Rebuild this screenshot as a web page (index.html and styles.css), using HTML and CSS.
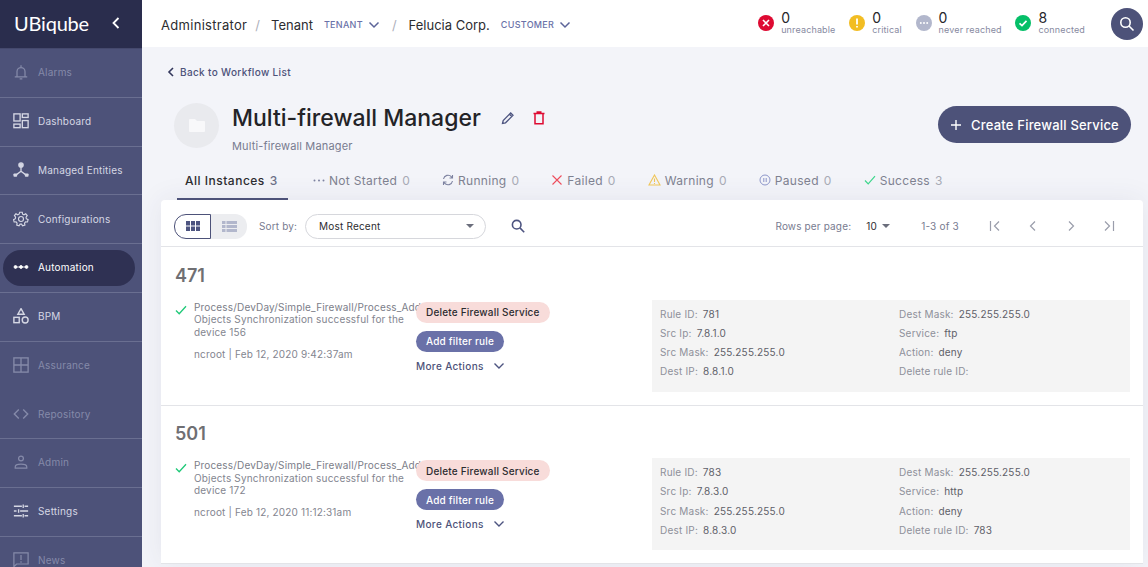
FILE: index.html
```html
<!DOCTYPE html>
<html lang="en">
<head>
    <meta charset="UTF-8">
    <meta name="viewport" content="width=device-width, initial-scale=1.0">
    <title>UBiqube - Multi-firewall Manager</title>
    <link rel="stylesheet" href="styles.css">
</head>
<body>

<div class="app">
    <aside class="sidebar">
        <div class="brand">
            <span class="brand-name">UBiqube</span>
            <svg class="brand-back" width="10" height="14" viewBox="0 0 10 14"><path d="M7.5 2 L2.5 7 L7.5 12" fill="none" stroke="#fff" stroke-width="1.8"/></svg>
        </div>
        <nav class="menu">
            <a class="menu-item dim">
                <svg viewBox="0 0 18 18" fill="none" stroke="currentColor" stroke-width="1.4"><path d="M2 14.5h14M4.500 14.500V8.500a4.500 4.500 0 0 1 9 0v6M7.500 16.800h3M9 1.500v2.500"/></svg>
                <span>Alarms</span>
            </a>
            <a class="menu-item">
                <svg viewBox="0 0 18 18" fill="none" stroke="currentColor" stroke-width="1.5"><rect x="1" y="1" width="7" height="8"/><rect x="10.500" y="1" width="6.500" height="4"/><rect x="1" y="12.500" width="7" height="4"/><rect x="10.500" y="8.500" width="6.500" height="8"/></svg>
                <span>Dashboard</span>
            </a>
            <a class="menu-item">
                <svg viewBox="0 0 18 18" fill="currentColor" stroke="currentColor" stroke-width="1.5"><circle cx="9" cy="3.400" r="2.400"/><rect x="0.500" y="12.800" width="4.200" height="3.800" stroke="none" rx="1"/><rect x="13.300" y="12.800" width="4.200" height="3.800" stroke="none" rx="1"/><path d="M9 5v5.500M9 10.500l-5.500 4M9 10.500l5.500 4" fill="none"/></svg>
                <span>Managed Entities</span>
            </a>
            <a class="menu-item">
                <svg viewBox="0 0 18 18" fill="none" stroke="currentColor" stroke-width="1.3"><circle cx="9" cy="9" r="2.800"/><path d="M7.600 1.400h2.800l.4 2.200 1.500.7 2-1.100 1.700 2-1.300 1.800.3 1.700 2 1-.7 2.700-2.200-.1-1.100 1.300.4 2.200-2.600.9-1.200-1.900h-1.600l-1.200 1.900-2.600-.9.4-2.200-1.100-1.300-2.200.1-.7-2.700 2-1 .3-1.700-1.300-1.800 1.700-2 2 1.100 1.500-.7z"/></svg>
                <span>Configurations</span>
            </a>
            <a class="menu-item active">
                <svg viewBox="0 0 18 18" fill="#fff" stroke="#fff" stroke-width="1"><circle cx="2.800" cy="9" r="1.600"/><circle cx="9" cy="9" r="1.600"/><circle cx="15.200" cy="9" r="1.600"/><path d="M3 9h12"/></svg>
                <span>Automation</span>
            </a>
            <a class="menu-item">
                <svg viewBox="0 0 18 18" fill="none" stroke="currentColor" stroke-width="1.600"><path d="M9 .8 12.500 7H5.500z"/><rect x="1" y="10.500" width="6" height="6"/><circle cx="13.700" cy="13.500" r="3.300"/></svg>
                <span>BPM</span>
            </a>
            <a class="menu-item dim no-line">
                <svg viewBox="0 0 18 18" fill="none" stroke="currentColor" stroke-width="1.500"><rect x="1" y="1" width="16" height="16"/><path d="M9 1v16M1 9h16"/></svg>
                <span>Assurance</span>
            </a>
            <a class="menu-item dim">
                <svg viewBox="0 0 18 18" fill="none" stroke="currentColor" stroke-width="1.600"><path d="M6.500 4 1.500 9l5 5M11.500 4l5 5-5 5"/></svg>
                <span>Repository</span>
            </a>
            <a class="menu-item dim">
                <svg viewBox="0 0 18 18" fill="none" stroke="currentColor" stroke-width="1.400"><circle cx="9" cy="5" r="2.700"/><path d="M2.500 15.800v-1.300c0-1.800 2.600-3 6.500-3s6.500 1.200 6.500 3v1.300z"/></svg>
                <span>Admin</span>
            </a>
            <a class="menu-item">
                <svg viewBox="0 0 18 18" fill="none" stroke="currentColor" stroke-width="1.500"><path d="M1 3.700h9M13 3.700h4M11.500 1.700v4M1 9h3M8 9h9M6.300 7v4M1 14.300h9M13 14.300h4M11.500 12.300v4"/></svg>
                <span>Settings</span>
            </a>
            <a class="menu-item dim">
                <svg viewBox="0 0 18 18" fill="none" stroke="currentColor" stroke-width="1.400"><path d="M1 1h16v12.500H4l-3 3z"/><path d="M9 3.500v5.500M9 10.300v1.700"/></svg>
                <span>News</span>
            </a>
        </nav>
    </aside>

    <div class="main">
        <header class="topbar">
            <div class="crumbs">
                <span class="crumb-admin">Administrator</span>
                <span class="slash">/</span>
                <span>Tenant</span>
                <span class="crumb-tag">TENANT</span>
                <svg class="crumb-arrow" width="12" height="8" viewBox="0 0 12 8"><path d="M1.500 1.500 6 6l4.500-4.500" fill="none" stroke="#5c6499" stroke-width="1.500"/></svg>
                <span class="slash second">/</span>
                <span>Felucia Corp.</span>
                <span class="crumb-tag">CUSTOMER</span>
                <svg class="crumb-arrow" width="12" height="8" viewBox="0 0 12 8"><path d="M1.500 1.500 6 6l4.500-4.500" fill="none" stroke="#5c6499" stroke-width="1.500"/></svg>
            </div>
            <div class="stats">
                <div class="stat">
                    <svg width="16" height="16" viewBox="0 0 16 16"><circle cx="8" cy="8" r="8" fill="#de0a32"/><path d="M5 5l6 6M11 5l-6 6" stroke="#fff" stroke-width="1.600"/></svg>
                    <div class="stat-text"><b>0</b><small>unreachable</small></div>
                </div>
                <div class="stat">
                    <svg width="16" height="16" viewBox="0 0 16 16"><circle cx="8" cy="8" r="8" fill="#f2bd23"/><path d="M8 3.500v6M8 11v1.500" stroke="#fff" stroke-width="1.800"/></svg>
                    <div class="stat-text"><b>0</b><small>critical</small></div>
                </div>
                <div class="stat">
                    <svg width="16" height="16" viewBox="0 0 16 16"><circle cx="8" cy="8" r="8" fill="#b2b7cc"/><circle cx="4.800" cy="8" r="1" fill="#fff"/><circle cx="8" cy="8" r="1" fill="#fff"/><circle cx="11.200" cy="8" r="1" fill="#fff"/></svg>
                    <div class="stat-text"><b>0</b><small>never reached</small></div>
                </div>
                <div class="stat">
                    <svg width="16" height="16" viewBox="0 0 16 16"><circle cx="8" cy="8" r="8" fill="#05bf68"/><path d="M4.500 8.300 7 10.600l4.500-4.800" fill="none" stroke="#fff" stroke-width="1.700"/></svg>
                    <div class="stat-text"><b>8</b><small>connected</small></div>
                </div>
            </div>
            <div class="top-search">
                <svg width="16" height="16" viewBox="0 0 16 16" fill="none" stroke="#fff" stroke-width="1.600"><circle cx="6.500" cy="6.500" r="4.700"/><path d="M10 10l4.500 4.500"/></svg>
            </div>
        </header>

        <div class="content">
            <a class="back-link">
                <svg width="8" height="10" viewBox="0 0 8 10"><path d="M6 1 2 5l4 4" fill="none" stroke="#33375c" stroke-width="1.600"/></svg>
                Back to Workflow List
            </a>

            <div class="title-row">
                <div class="folder">
                    <svg width="16" height="13" viewBox="0 0 16 13"><path d="M1 0h5l2 2h7a1 1 0 0 1 1 1v9a1 1 0 0 1-1 1H1a1 1 0 0 1-1-1V1a1 1 0 0 1 1-1z" fill="#f8f8fa"/></svg>
                </div>
                <div class="title-text">
                    <div class="title-line">
                        <h1>Multi-firewall Manager</h1>
                        <svg class="edit-icon" width="14" height="14" viewBox="0 0 14 14" fill="none" stroke="#4d5480" stroke-width="1.300"><path d="M1.500 12.500l.7-3L9.700 2l2.300 2.300-7.500 7.500zM8.500 3.200l2.300 2.300"/></svg>
                        <svg class="trash-icon" width="14" height="14" viewBox="0 0 14 14" fill="none" stroke="#de0a32" stroke-width="1.500"><path d="M1.500 2.500h11M4.500 1h5M3 2.500v10.300h8V2.500"/></svg>
                    </div>
                    <div class="subtitle">Multi-firewall Manager</div>
                </div>
                <button class="create-btn">
                    <svg width="12" height="12" viewBox="0 0 12 12"><path d="M6 1v10M1 6h10" stroke="#fff" stroke-width="1.400"/></svg>
                    Create Firewall Service
                </button>
            </div>

            <div class="tabs">
                <div class="tab active">All Instances <span>3</span></div>
                <div class="tab">
                    <svg width="12" height="11" viewBox="0 0 12 11" fill="#7d82a0"><circle cx="1.500" cy="5.500" r="1"/><circle cx="6" cy="5.500" r="1"/><circle cx="10.500" cy="5.500" r="1"/></svg>
                    Not Started <span>0</span>
                </div>
                <div class="tab">
                    <svg width="12" height="12" viewBox="0 0 12 12" fill="none" stroke="#7d82a0" stroke-width="1.100"><path d="M1.500 5a4.600 4.600 0 0 1 8-2.200L10.500 4M10.500 7a4.600 4.600 0 0 1-8 2.200L1.500 8M10.500 1v3h-3M1.500 11V8h3"/></svg>
                    Running <span>0</span>
                </div>
                <div class="tab">
                    <svg width="12" height="12" viewBox="0 0 12 12"><path d="M1.500 1.500l9 9M10.500 1.500l-9 9" stroke="#ee4c5c" stroke-width="1.100"/></svg>
                    Failed <span>0</span>
                </div>
                <div class="tab">
                    <svg width="13" height="12" viewBox="0 0 13 12" fill="none" stroke="#f0c659" stroke-width="1.100"><path d="M6.500 1 12 11H1zM6.500 4.500v3.500M6.500 9v1"/></svg>
                    Warning <span>0</span>
                </div>
                <div class="tab">
                    <svg width="12" height="12" viewBox="0 0 12 12" fill="none" stroke="#8c95c9" stroke-width="1"><circle cx="6" cy="6" r="5"/><path d="M4.800 4v4M7.200 4v4"/></svg>
                    Paused <span>0</span>
                </div>
                <div class="tab">
                    <svg width="12" height="10" viewBox="0 0 12 10"><path d="M1 5.500 4.200 8.800 11 1.200" fill="none" stroke="#3dd68c" stroke-width="1.200"/></svg>
                    Success <span>3</span>
                </div>
            </div>

            <div class="card">
                <div class="toolbar">
                    <div class="view-switch">
                        <div class="view-btn on">
                            <svg width="14" height="10" viewBox="0 0 14 10" fill="#4d5480"><rect width="4" height="4.500"/><rect x="5" width="4" height="4.500"/><rect x="10" width="4" height="4.500"/><rect y="5.500" width="4" height="4.500"/><rect x="5" y="5.500" width="4" height="4.500"/><rect x="10" y="5.500" width="4" height="4.500"/></svg>
                        </div>
                        <div class="view-btn">
                            <svg width="15" height="11" viewBox="0 0 15 11" fill="#b2b7cc"><rect width="3.500" height="3"/><rect x="4.500" width="10.500" height="3"/><rect y="4" width="3.500" height="3"/><rect x="4.500" y="4" width="10.500" height="3"/><rect y="8" width="3.500" height="3"/><rect x="4.500" y="8" width="10.500" height="3"/></svg>
                        </div>
                    </div>
                    <span class="sort-label">Sort by:</span>
                    <div class="sort-select">
                        <span>Most Recent</span>
                        <i class="caret"></i>
                    </div>
                    <svg class="list-search" width="14" height="14" viewBox="0 0 14 14" fill="none" stroke="#4d5480" stroke-width="1.600"><circle cx="5.700" cy="5.700" r="4.300"/><path d="M8.900 8.900l4.300 4.300"/></svg>
                    <div class="pager">
                        <span class="sort-label">Rows per page:</span>
                        <span class="rows-value">10</span>
                        <i class="caret"></i>
                        <span class="range">1-3 of 3</span>
                        <div class="pager-arrows">
                            <svg width="12" height="12" viewBox="0 0 12 12" fill="none" stroke="#9a9dab" stroke-width="1.200"><path d="M1.500 1v10M10 1.500 5.500 6l4.500 4.500"/></svg>
                            <svg width="12" height="12" viewBox="0 0 12 12" fill="none" stroke="#9a9dab" stroke-width="1.200"><path d="M8 1.500 3.500 6 8 10.500"/></svg>
                            <svg width="12" height="12" viewBox="0 0 12 12" fill="none" stroke="#9a9dab" stroke-width="1.200"><path d="M4 1.500 8.500 6 4 10.500"/></svg>
                            <svg width="12" height="12" viewBox="0 0 12 12" fill="none" stroke="#9a9dab" stroke-width="1.200"><path d="M10.500 1v10M2 1.500 6.500 6 2 10.500"/></svg>
                        </div>
                    </div>
                </div>

                <div class="instance">
                    <h2>471</h2>
                    <div class="instance-body">
                        <svg class="ok-icon" width="12" height="10" viewBox="0 0 12 10"><path d="M1 5.500 4.200 8.800 11 1.200" fill="none" stroke="#1fc978" stroke-width="1.300"/></svg>
                        <div class="process">
                            <div class="process-name">Process/DevDay/Simple_Firewall/Process_Add_Filter_Rule_From_File</div>
                            <div class="process-msg">Objects Synchronization successful for the device 156</div>
                            <div class="process-meta">ncroot | Feb 12, 2020 9:42:37am</div>
                        </div>
                        <div class="actions">
                            <button class="pill danger">Delete Firewall Service</button>
                            <button class="pill primary">Add filter rule</button>
                            <a class="more">More Actions
                                <svg width="12" height="8" viewBox="0 0 12 8"><path d="M1.500 1.500 6 6l4.500-4.500" fill="none" stroke="#4d5480" stroke-width="1.400"/></svg>
                            </a>
                        </div>
                        <div class="details">
                            <div class="detail-col">
                                <div><label>Rule ID:</label> 781</div>
                                <div><label>Src Ip:</label> 7.8.1.0</div>
                                <div><label>Src Mask:</label> 255.255.255.0</div>
                                <div><label>Dest IP:</label> 8.8.1.0</div>
                            </div>
                            <div class="detail-col">
                                <div><label>Dest Mask:</label> 255.255.255.0</div>
                                <div><label>Service:</label> ftp</div>
                                <div><label>Action:</label> deny</div>
                                <div><label>Delete rule ID:</label></div>
                            </div>
                        </div>
                    </div>
                </div>

                <div class="instance">
                    <h2>501</h2>
                    <div class="instance-body">
                        <svg class="ok-icon" width="12" height="10" viewBox="0 0 12 10"><path d="M1 5.500 4.200 8.800 11 1.200" fill="none" stroke="#1fc978" stroke-width="1.300"/></svg>
                        <div class="process">
                            <div class="process-name">Process/DevDay/Simple_Firewall/Process_Add_Filter_Rule_From_File</div>
                            <div class="process-msg">Objects Synchronization successful for the device 172</div>
                            <div class="process-meta">ncroot | Feb 12, 2020 11:12:31am</div>
                        </div>
                        <div class="actions">
                            <button class="pill danger">Delete Firewall Service</button>
                            <button class="pill primary">Add filter rule</button>
                            <a class="more">More Actions
                                <svg width="12" height="8" viewBox="0 0 12 8"><path d="M1.500 1.500 6 6l4.500-4.500" fill="none" stroke="#4d5480" stroke-width="1.400"/></svg>
                            </a>
                        </div>
                        <div class="details">
                            <div class="detail-col">
                                <div><label>Rule ID:</label> 783</div>
                                <div><label>Src Ip:</label> 7.8.3.0</div>
                                <div><label>Src Mask:</label> 255.255.255.0</div>
                                <div><label>Dest IP:</label> 8.8.3.0</div>
                            </div>
                            <div class="detail-col">
                                <div><label>Dest Mask:</label> 255.255.255.0</div>
                                <div><label>Service:</label> http</div>
                                <div><label>Action:</label> deny</div>
                                <div><label>Delete rule ID:</label> 783</div>
                            </div>
                        </div>
                    </div>
                </div>
            </div>
        </div>
    </div>
</div>

</body>
</html>
```

FILE: styles.css
```css
* {
    box-sizing: border-box;
}

html, body {
    margin: 0;
    padding: 0;
    height: 567px;
    overflow: hidden;
}

body {
    background-color: #f3f4f9;
    font-family: Inter, "Noto Sans", sans-serif;
    color: #2c2c30;
}

.app {
    display: flex;
    height: 567px;
    overflow: hidden;
}

/* Sidebar */
.sidebar {
    width: 142px;
    flex: none;
    background-color: #4d5279;
    position: relative;
    z-index: 1;
}

.brand {
    height: 49px;
    background-color: #2a2d4d;
    border-bottom: 1px solid #45496d;
    display: flex;
    align-items: center;
    justify-content: space-between;
    padding: 0 21px 3px 14px;
}

.brand-name {
    color: #fff;
    font-family: Lato, Inter, sans-serif;
    font-size: 20px;
    font-weight: 400;
    letter-spacing: -0.2px;
}

.menu-item {
    height: 48.75px;
    display: flex;
    align-items: center;
    gap: 9px;
    padding: 0 0 1px 13px;
    font-size: 10px;
    letter-spacing: 0.2px;
    color: #d5d7e4;
    border-bottom: 1px solid #6a6f91;
}

.menu-item svg {
    flex: none;
    width: 16px;
    height: 16px;
}

.menu-item.dim {
    color: #858aa9;
}

.menu-item.no-line {
    border-bottom: none;
}

.menu-item.active {
    color: #fff;
    position: relative;
}

.menu-item.active::before {
    content: "";
    position: absolute;
    left: 3px;
    right: 7px;
    top: 6px;
    bottom: 6px;
    border-radius: 18px;
    background-color: #2f3153;
}

.menu-item.active svg, .menu-item.active span {
    position: relative;
}

/* Top bar */
.main {
    flex: 1;
    min-width: 0;
}

.topbar {
    height: 47px;
    background-color: #fff;
    display: flex;
    align-items: center;
    padding: 0 5px 0 19px;
    position: relative;
    z-index: 1;
}

.crumbs {
    display: flex;
    align-items: center;
    font-size: 13px;
    color: #2c2c30;
    flex: 1;
    padding-top: 2px;
}

.crumb-admin {
    letter-spacing: 0.3px;
}

.slash {
    color: #aeb0bb;
    margin: 0 11px 0 8px;
}

.slash.second {
    margin: 0 12px 0 12px;
}

.crumb-tag {
    font-size: 9px;
    font-weight: 500;
    color: #6a71a8;
    margin-left: 11px;
    margin-right: 5px;
    letter-spacing: 0.3px;
}

.stats {
    display: flex;
    gap: 13.7px;
    margin-right: 26px;
    padding-bottom: 2px;
}

.stat {
    display: flex;
    align-items: center;
    gap: 7px;
}

.stat-text {
    display: flex;
    flex-direction: column;
}

.stat-text b {
    font-weight: 400;
    font-size: 14px;
    line-height: 14px;
    color: #26262a;
}

.stat-text small {
    font-size: 9px;
    line-height: 10px;
    letter-spacing: 0.15px;
    color: #878a9f;
}

.top-search {
    width: 32px;
    height: 32px;
    border-radius: 50%;
    background-color: #4d5279;
    display: flex;
    align-items: center;
    justify-content: center;
}

/* Page head */
.content {
    padding: 0 5px 0 19px;
}

.back-link {
    display: flex;
    align-items: center;
    gap: 5px;
    padding: 13px 0 0 6px;
    height: 37px;
    font-size: 10px;
    font-weight: 500;
    letter-spacing: 0.35px;
    color: #4d5279;
}

.title-row {
    display: flex;
    align-items: flex-start;
    padding: 19px 0 0 13px;
    height: 76px;
}

.folder {
    width: 45px;
    height: 45px;
    border-radius: 50%;
    background-color: #e9eaee;
    display: flex;
    align-items: center;
    justify-content: center;
}

.title-text {
    margin-left: 13px;
    flex: 1;
}

.title-line {
    display: flex;
    align-items: center;
}

h1 {
    margin: 0;
    font-size: 23px;
    line-height: 30px;
    font-weight: 500;
    color: #232327;
}

.edit-icon {
    margin-left: 20px;
}

.trash-icon {
    margin-left: 17px;
}

.subtitle {
    font-size: 11px;
    letter-spacing: 0.15px;
    color: #787b90;
    margin-top: 6px;
}

.create-btn {
    width: 193px;
    height: 37px;
    margin: 3px 12px 0 0;
    border: none;
    border-radius: 19px;
    background-color: #4d5279;
    color: #fff;
    font-family: inherit;
    font-size: 13px;
    font-weight: 500;
    letter-spacing: 0.2px;
    display: flex;
    align-items: center;
    justify-content: center;
    gap: 9px;
}

/* Tabs */
.tabs {
    display: flex;
    height: 40px;
    padding-left: 16px;
}

.tab {
    display: flex;
    align-items: center;
    gap: 4px;
    padding: 0 16px;
    height: 40px;
    font-size: 12px;
    letter-spacing: 0.3px;
    color: #7e8190;
    white-space: nowrap;
}

.tab span {
    color: #a8aab5;
    margin-left: 1px;
}

.tab.active {
    color: #2c2c30;
    font-weight: 500;
    width: 111px;
    padding: 2px 0 0 8px;
    margin-right: 9px;
    letter-spacing: 0.5px;
    border-bottom: 2px solid #4d5279;
}

.tab.active span {
    color: #6d7088;
}

/* Card */
.card {
    background-color: #fff;
    border-radius: 4px 4px 0 0;
    box-shadow: 0 0 28px rgba(45, 48, 90, 0.08);
}

.toolbar {
    height: 47px;
    display: flex;
    align-items: center;
    padding: 6px 13px 0;
    border-bottom: 1px solid #e3e4e8;
}

.view-switch {
    display: flex;
    height: 25px;
    width: 73px;
}

.view-btn {
    width: 36px;
    display: flex;
    align-items: center;
    justify-content: center;
    background-color: #ecedf0;
    border-radius: 0 12px 12px 0;
}

.view-btn.on {
    width: 37px;
    background-color: #fff;
    border: 1px solid #4d5279;
    border-radius: 12px 0 0 12px;
}

.sort-label {
    font-size: 10px;
    letter-spacing: 0.15px;
    color: #787b90;
    margin-left: 12px;
}

.sort-select {
    width: 181px;
    height: 25px;
    margin-left: 8px;
    padding: 0 11px 0 13px;
    border: 1px solid #d6d7dc;
    border-radius: 13px;
    display: flex;
    align-items: center;
    justify-content: space-between;
    font-size: 10px;
    letter-spacing: 0.2px;
    color: #2c2c30;
}

.caret {
    width: 0;
    height: 0;
    border-left: 4.5px solid transparent;
    border-right: 4.5px solid transparent;
    border-top: 4.5px solid #6b6e7c;
}

.list-search {
    margin-left: 25px;
}

.pager {
    margin-left: auto;
    display: flex;
    align-items: center;
}

.rows-value {
    font-size: 10px;
    letter-spacing: 0.3px;
    margin: 0 5px 0 15px;
}

.range {
    font-size: 10px;
    letter-spacing: 0.2px;
    color: #787b90;
    margin-left: 31px;
}

.pager-arrows {
    display: flex;
    gap: 26px;
    margin: 0 15px 0 30px;
}

/* Instance rows */
.instance {
    height: 158.5px;
    padding: 17.75px 13px 0 14px;
    border-bottom: 1px solid #e3e4e8;
}

.instance h2 {
    margin: 0;
    font-size: 18px;
    line-height: 22px;
    font-weight: 600;
    color: #6f6f73;
}

.instance-body {
    display: flex;
    align-items: flex-start;
    margin-top: 13px;
}

.ok-icon {
    flex: none;
    margin-top: 5px;
}

.process {
    width: 222px;
    flex: none;
    margin-left: 7px;
    font-size: 10px;
    line-height: 12.5px;
    letter-spacing: 0.17px;
    color: #83858f;
}

.process-name {
    white-space: nowrap;
    color: #7b7d88;
    margin-top: 1px;
}

.process-meta {
    margin-top: 9.5px;
}

.actions {
    width: 236px;
    flex: none;
    position: relative;
    padding-top: 2px;
    display: flex;
    flex-direction: column;
    align-items: flex-start;
}

.pill {
    height: 21px;
    border: none;
    border-radius: 11px;
    padding: 0 10px;
    font-family: inherit;
    font-size: 10px;
    font-weight: 500;
    letter-spacing: 0.2px;
    margin-bottom: 8px;
}

.pill.danger {
    background-color: #f8dcda;
    color: #2c2c30;
}

.pill.primary {
    background-color: #6a71a8;
    color: #fff;
}

.more {
    display: flex;
    align-items: center;
    gap: 9px;
    font-size: 10px;
    font-weight: 500;
    letter-spacing: 0.35px;
    color: #4d5279;
}

.details {
    width: 478px;
    height: 92px;
    background-color: #f4f4f4;
    display: flex;
    padding: 5px 8px;
    font-size: 10px;
    letter-spacing: 0.2px;
    color: #5e6068;
}

.detail-col {
    line-height: 19.2px;
}

.detail-col:first-child {
    width: 239px;
    flex: none;
}

.detail-col label {
    color: #8e909a;
    margin-right: 2px;
}
```
